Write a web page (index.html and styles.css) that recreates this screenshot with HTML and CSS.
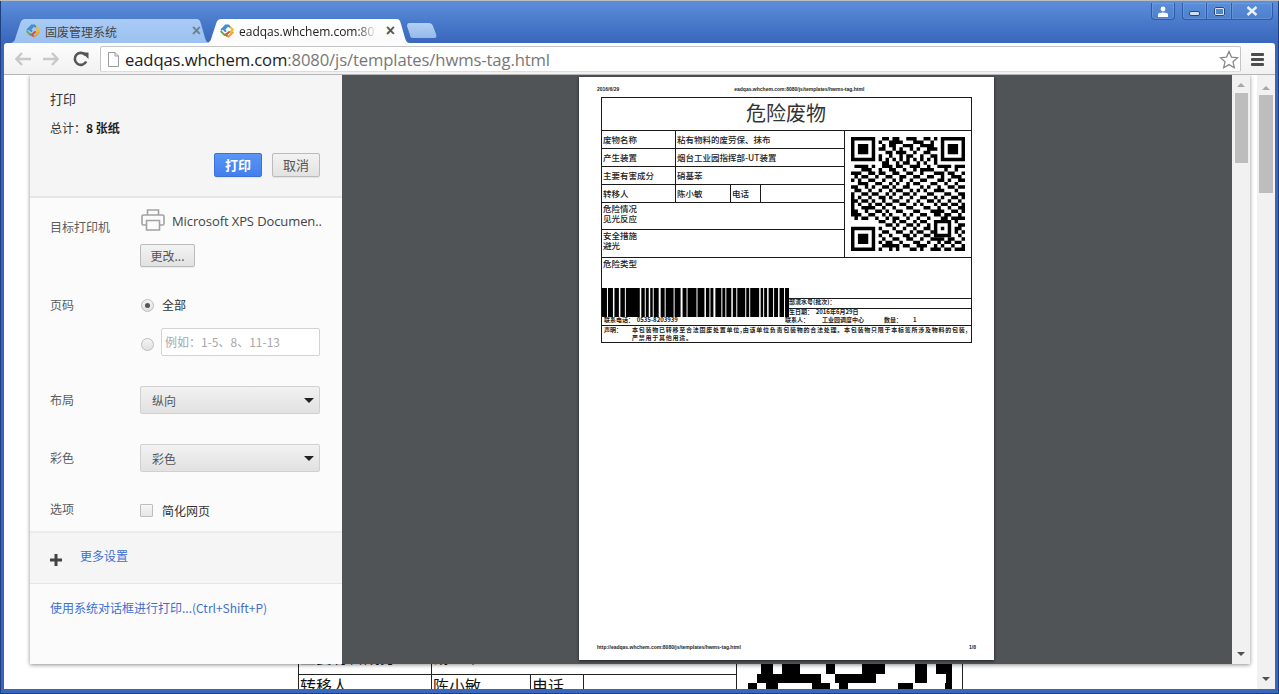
FILE: index.html
```html
<!DOCTYPE html>
<html lang="zh">
<head>
<meta charset="utf-8">
<title>hwms-tag</title>
<link rel="stylesheet" href="styles.css">
</head>
<body>
<div class="window">
  <header class="tabstrip">
    <div class="tab tab-inactive">
      <svg class="favicon" viewBox="0 0 16 16"><path d="M7 2.2 2.6 6.6" class="fav-blue"/><path d="M9 2.2 10.6 3.8" class="fav-blue"/><path d="M2.2 8.6 5.6 12" class="fav-green"/><path d="M9.4 13.8 13.8 9.4" class="fav-orange"/><path d="M11.6 4.4 13.8 6.8 11.6 9" class="fav-yellow"/><path d="M6.4 8 4.8 6.4 8 3.4" class="fav-blue"/><path d="M8 12.8 6.6 11.4" class="fav-red"/><path d="M8 10.8 10 9" class="fav-red"/></svg>
      <span class="tab-title">固废管理系统</span>
      <span class="tab-close">×</span>
    </div>
    <div class="tab tab-active">
      <svg class="favicon" viewBox="0 0 16 16"><path d="M7 2.2 2.6 6.6" class="fav-blue"/><path d="M9 2.2 10.6 3.8" class="fav-blue"/><path d="M2.2 8.6 5.6 12" class="fav-green"/><path d="M9.4 13.8 13.8 9.4" class="fav-orange"/><path d="M11.6 4.4 13.8 6.8 11.6 9" class="fav-yellow"/><path d="M6.4 8 4.8 6.4 8 3.4" class="fav-blue"/><path d="M8 12.8 6.6 11.4" class="fav-red"/><path d="M8 10.8 10 9" class="fav-red"/></svg>
      <span class="tab-title tab-title-fade">eadqas.whchem.com:80</span>
      <span class="tab-close tab-close-dark">×</span>
    </div>
    <div class="newtab"></div>
    <div class="win-controls">
      <div class="win-btn win-user"><svg width="14" height="11" viewBox="0 0 14 11"><circle cx="7" cy="3" r="2.4"/><path d="M2 11V8.4C2 7.4 4 6.6 7 6.6s5 .8 5 1.8V11z"/></svg></div>
      <div class="win-group">
        <div class="win-btn win-min"><span class="glyph-min"></span></div>
        <div class="win-btn win-max"><span class="glyph-max"></span></div>
        <div class="win-btn win-close"><svg width="12" height="10" viewBox="0 0 12 10"><path d="M1.5 1 10.5 9M10.5 1 1.5 9"/></svg></div>
      </div>
    </div>
  </header>

  <nav class="toolbar">
    <svg class="nav-icon" width="16" height="14" viewBox="0 0 16 14"><path d="M7 1 1.5 7 7 13M2 7h14" class="nav-off"/></svg>
    <svg class="nav-icon nav-fwd" width="16" height="14" viewBox="0 0 16 14"><path d="M9 1l5.500 6L9 13M14 7H0" class="nav-off"/></svg>
    <svg class="nav-icon nav-reload" width="16" height="16" viewBox="0 0 16 16"><path d="M13.200 10.500A6 6 0 1 1 12.600 4.200" class="nav-on"/><path d="M9 1.500h6.500v6.500z" class="nav-fill"/></svg>
    <div class="omnibox">
      <svg class="doc-icon" width="11" height="15" viewBox="0 0 11 15"><path d="M.5.500h6.500l3.500 3.500v10.500h-10zM7 .5v3.500h3.500"/></svg>
      <span class="url"><b class="url-host">eadqas.whchem.com</b>:8080/js/templates/hwms-tag.html</span>
      <svg class="star" width="20" height="19" viewBox="0 0 20 19"><path d="M10 1.500l2.500 5.600 6 .6-4.500 4 1.300 6L10 14.600l-5.300 3.100 1.300-6-4.500-4 6-.6z"/></svg>
    </div>
    <div class="menu-icon"><span></span><span></span><span></span></div>
  </nav>

  <main class="content">
    <div class="doc">
      <table class="doc-table">
        <colgroup><col class="dc1"><col class="dc2"><col class="dc3"><col class="dc4"></colgroup>
        <tr class="doc-row1"><td>主要有害成分</td><td colspan="3">硝基苯</td></tr>
        <tr class="doc-row2"><td>转移人</td><td>陈小敏</td><td>电话</td><td></td></tr>
      </table>
      <div class="doc-qr-cell">
        <svg class="doc-qr" width="204" height="26" viewBox="0 0 204 26"><path d="M13 0h12v10H13zM34 0h18v10H34zM78 0h9v10h-9zM114 0h23v10h-23zM167 0h12v10h-12zM188 0h16v10h-16zM9 10h64v9H9zM87 10h41v9H87zM167 10h12v9h-12zM198 10h6v9h-6zM0 19h9v7H0zM18 19h12v7H18zM64 19h18v7H64zM91 19h9v7h-9zM150 19h15v7h-15zM197 19h7v7h-7z"/></svg>
      </div>
      <div class="doc-scroll">
        <span class="arrow-up"></span>
        <span class="scroll-thumb scroll-thumb-outer"></span>
        <span class="scroll-space"></span>
        <span class="arrow-down"></span>
      </div>
    </div>

    <section class="dialog">
      <aside class="sidebar">
        <div class="side-head">
          <h1 class="side-title">打印</h1>
          <p class="side-total">总计：<b>8 张纸</b></p>
          <div class="side-actions">
            <button class="btn btn-primary">打印</button>
            <button class="btn btn-cancel">取消</button>
          </div>
        </div>
        <div class="settings">
          <div class="row">
            <div class="row-label row-label-dest">目标打印机</div>
            <div class="row-ctl">
              <div class="printer">
                <svg width="24" height="22" viewBox="0 0 24 22"><path d="M6.500 6V1h11v5M5.500 16H2.500A1.500 1.500 0 0 1 1 14.500V7.500A1.500 1.500 0 0 1 2.500 6h19A1.500 1.500 0 0 1 23 7.500v7a1.500 1.500 0 0 1-1.500 1.500h-3M5.500 11.500h13v9.500h-13z"/></svg>
                <span class="printer-name">Microsoft XPS Documen..</span>
              </div>
              <button class="btn btn-change">更改...</button>
            </div>
          </div>
          <div class="row row-pages">
            <div class="row-label">页码</div>
            <div class="row-ctl">
              <label class="check-line"><span class="radio radio-on"></span><span class="check-text">全部</span></label>
              <div class="range-line"><span class="radio"></span><span class="range-input">例如：1-5、8、11-13</span></div>
            </div>
          </div>
          <div class="row row-select">
            <div class="row-label row-label-select">布局</div>
            <div class="select">纵向<span class="caret"></span></div>
          </div>
          <div class="row row-select">
            <div class="row-label row-label-select">彩色</div>
            <div class="select">彩色<span class="caret"></span></div>
          </div>
          <div class="row row-option">
            <div class="row-label row-label-option">选项</div>
            <label class="check-line"><span class="checkbox"></span><span class="check-text">简化网页</span></label>
          </div>
        </div>
        <div class="more">
          <svg class="plus" width="12" height="12" viewBox="0 0 12 12"><path d="M4.500 0h3v4.500H12v3H7.500V12h-3V7.500H0v-3h4.500z"/></svg>
          <a class="link">更多设置</a>
        </div>
        <div class="sys-link"><a class="link">使用系统对话框进行打印...(Ctrl+Shift+P)</a></div>
      </aside>

      <div class="preview">
        <article class="page">
          <div class="page-head"><span>2016/6/29</span><span class="page-head-url">eadqas.whchem.com:8080/js/templates/hwms-tag.html</span></div>
          <table class="tag">
            <colgroup><col class="c1"><col class="c2"><col class="c3"><col class="c4"><col class="c5"></colgroup>
            <tr class="r-title"><td colspan="5">危险废物</td></tr>
            <tr class="r-18"><td>废物名称</td><td colspan="3">粘有物料的废劳保、抹布</td>
              <td rowspan="6" class="qr-cell">
                <svg class="qr" width="114" height="114" viewBox="0 0 33 33">
                  <path class="qr-f" fill-rule="evenodd" d="M0 0h7v7H0zM1 1v5h5V1zM2 2h3v3H2zM26 0h7v7h-7zM27 1v5h5V1zM28 2h3v3h-3zM0 26h7v7H0zM1 27v5h5v-5zM2 28h3v3H2zM24 24h5v5h-5zM25 25v3h3v-3zM26 26h1v1h-1z"/>
                  <path class="qr-d" d="M9 .5h2M12 .5h2M16 .5h3M21 .5h2M24 .5h1M8 1.500h1M11 1.500h4M18 1.500h3M23 1.500h1M9 2.500h1M11 2.500h2M15 2.500h3M20 2.500h4M8 3.500h2M12 3.500h1M14 3.500h1M17 3.500h1M19 3.500h1M22 3.500h3M10 4.500h2M13 4.500h3M18 4.500h1M21 4.500h2M8 5.500h1M11 5.500h1M14 5.500h1M16 5.500h2M20 5.500h1M23 5.500h2M8 6.500h1M10 6.500h1M12 6.500h1M14 6.500h1M16 6.500h1M18 6.500h1M20 6.500h1M22 6.500h1M24 6.500h1M9 7.500h2M13 7.500h1M15 7.500h2M19 7.500h1M21 7.500h1M24 7.500h1M1 8.500h4M6 8.500h1M9 8.500h3M13 8.500h2M17 8.500h3M22 8.500h1M25 8.500h4M30 8.500h3M3 9.500h3M8 9.500h1M11 9.500h2M15 9.500h1M18 9.500h1M20 9.500h4M27 9.500h1M30 9.500h1M0 10.500h3M5 10.500h2M8 10.500h2M12 10.500h2M16 10.500h2M20 10.500h1M24 10.500h3M28 10.500h2M32 10.500h1M1 11.500h1M3 11.500h2M7 11.500h1M10 11.500h2M14 11.500h2M18 11.500h2M22 11.500h2M26 11.500h1M29 11.500h3M0 12.500h1M2 12.500h1M5 12.500h2M9 12.500h1M12 12.500h1M14 12.500h1M17 12.500h1M20 12.500h2M25 12.500h2M28 12.500h1M31 12.500h2M2 13.500h3M7 13.500h2M11 13.500h1M13 13.500h1M16 13.500h1M18 13.500h2M23 13.500h2M27 13.500h1M30 13.500h1M0 14.500h2M4 14.500h1M6 14.500h1M9 14.500h2M12 14.500h1M15 14.500h2M20 14.500h1M22 14.500h1M25 14.500h1M28 14.500h2M31 14.500h2M1 15.500h2M5 15.500h1M8 15.500h1M11 15.500h1M13 15.500h2M17 15.500h1M19 15.500h1M21 15.500h1M24 15.500h3M30 15.500h1M0 16.500h1M3 16.500h2M6 16.500h2M10 16.500h1M12 16.500h1M15 16.500h2M18 16.500h1M22 16.500h2M27 16.500h2M31 16.500h2M0 17.500h1M2 17.500h1M5 17.500h1M8 17.500h2M11 17.500h1M14 17.500h1M17 17.500h1M20 17.500h2M24 17.500h1M26 17.500h1M29 17.500h2M32 17.500h1M0 18.500h2M3 18.500h2M6 18.500h1M9 18.500h1M12 18.500h2M16 18.500h1M19 18.500h1M22 18.500h2M25 18.500h1M28 18.500h1M31 18.500h1M0 19.500h1M2 19.500h1M5 19.500h1M7 19.500h2M10 19.500h2M14 19.500h2M18 19.500h1M20 19.500h1M24 19.500h1M26 19.500h2M29 19.500h2M32 19.500h1M0 20.500h1M3 20.500h4M9 20.500h1M12 20.500h1M16 20.500h2M21 20.500h2M25 20.500h1M28 20.500h1M31 20.500h2M0 21.500h2M4 21.500h1M7 21.500h2M10 21.500h1M13 21.500h2M18 21.500h2M23 21.500h4M29 21.500h2M32 21.500h1M0 22.500h3M5 22.500h2M9 22.500h1M11 22.500h1M15 22.500h1M17 22.500h1M20 22.500h2M24 22.500h2M27 22.500h2M31 22.500h1M1 23.500h1M3 23.500h2M7 23.500h1M10 23.500h1M12 23.500h2M16 23.500h1M19 23.500h1M22 23.500h1M26 23.500h2M29 23.500h4M8 24.500h2M12 24.500h1M14 24.500h2M18 24.500h1M20 24.500h2M30 24.500h1M10 25.500h2M13 25.500h1M16 25.500h2M19 25.500h1M22 25.500h1M31 25.500h2M8 26.500h1M12 26.500h1M15 26.500h1M18 26.500h1M21 26.500h2M30 26.500h2M9 27.500h2M13 27.500h2M17 27.500h1M19 27.500h2M23 27.500h1M30 27.500h1M32 27.500h1M8 28.500h1M11 28.500h1M15 28.500h2M18 28.500h1M21 28.500h2M31 28.500h1M9 29.500h1M12 29.500h2M16 29.500h2M20 29.500h1M23 29.500h4M28 29.500h2M32 29.500h1M8 30.500h1M10 30.500h2M14 30.500h1M18 30.500h2M22 30.500h1M25 30.500h1M27 30.500h2M30 30.500h2M9 31.500h5M15 31.500h2M19 31.500h3M24 31.500h1M26 31.500h1M29 31.500h1M32 31.500h1M8 32.500h1M11 32.500h1M13 32.500h1M17 32.500h2M20 32.500h1M23 32.500h3M27 32.500h2M30 32.500h3"/>
                </svg>
              </td></tr>
            <tr class="r-18"><td>产生装置</td><td colspan="3">烟台工业园指挥部-UT装置</td></tr>
            <tr class="r-18"><td>主要有害成分</td><td colspan="3">硝基苯</td></tr>
            <tr class="r-18"><td>转移人</td><td>陈小敏</td><td>电话</td><td></td></tr>
            <tr class="r-27"><td colspan="4" class="top">危险情况<br>见光反应</td></tr>
            <tr class="r-28"><td colspan="4" class="top">安全措施<br>避光</td></tr>
            <tr><td colspan="5" class="lower">
              <div class="hazard">危险类型</div>
              <div class="bar-row">
                <svg class="barcode" width="187" height="29" viewBox="0 0 188 29"><path d="M0 0h188v29H0z"/><path class="bar-gap" d="M5 0h1v29H5zM11 0h1.500v29H11zM17 0h1.500v29H17zM23 0h1v29h-1zM38 0h1.500v29H38zM43 0h1v29H43zM47 0h1.500v29H47zM51 0h1v29h-1zM57 0h2v29h-2zM63 0h1v29H63zM72 0h1v29H72zM79 0h2v29h-2zM85 0h1v29h-1zM95 0h1v29H95zM103 0h1.500v29H103zM108 0h1v29h-1zM112 0h2v29h-2zM120 0h1v29H120zM124 0h1v29H124zM130 0h1.500v29H130zM135 0h1v29h-1zM144 0h1v29h-1zM148 0h1v29h-1zM158 0h1.500v29H158zM162 0h1v29H162zM166 0h1.500v29H166zM172 0h1v29h-1zM177 0h1.500v29H177zM183 0h1v29H183z"/></svg>
                <div class="bar-side">
                  <div class="bar-line">部流水号(批次)：</div>
                  <div class="bar-line">生日期：&nbsp; 2016年6月29日</div>
                </div>
              </div>
              <div class="contact">
                <span class="ct-phone">联系电话：&nbsp; 0535-8203939</span>
                <span class="ct-person">联系人：</span>
                <span class="ct-org">工业园调度中心</span>
                <span class="ct-qty">数量：</span>
                <span>1</span>
              </div>
              <div class="notice">
                <span class="notice-label">声明：</span>
                <span class="notice-body">本包装物已转移至合法固废处置单位,由该单位负责包装物的合法处理。本包装物只限于本标签所涉及物料的包装,<br>严禁用于其他用途。</span>
              </div>
            </td></tr>
          </table>
          <div class="page-foot"><span>http://eadqas.whchem.com:8080/js/templates/hwms-tag.html</span><span>1/8</span></div>
        </article>
      </div>

      <div class="preview-scroll">
        <span class="arrow-up"></span>
        <span class="scroll-thumb scroll-thumb-inner"></span>
        <span class="scroll-space"></span>
        <span class="arrow-down"></span>
      </div>
    </section>
  </main>
</div>
</body>
</html>
```

FILE: styles.css
```css
* { box-sizing: border-box; }
html, body { margin: 0; height: 100%; overflow: hidden; }
body {
  font-family: "Noto Sans CJK SC", "Noto Sans", sans-serif;
  font-size: 12px;
  color: #333;
  background: #c9c9c9;
}
.window {
  width: 1279px;
  height: 694px;
  display: flex;
  flex-direction: column;
  border-top: 1px solid #bdbdbd;
  padding: 2px 4px 5px;
  background: linear-gradient(#5c8fdb 0, #4a7bcb 20px, #3a66bb 42px, #3a66bb 100%);
  box-shadow: inset -1px -1px 0 #1f3f80, inset 1px 0 0 #1f3f80;
}

/* tab strip */
.tabstrip { height: 40px; display: flex; align-items: flex-end; flex: none; }
.tab {
  height: 24px;
  display: flex;
  align-items: center;
  flex: none;
  position: relative;
}
.tab-inactive {
  width: 200px;
  margin-left: 6px;
  padding-left: 15px;
  background: linear-gradient(#a9cbf5, #9cc1f0);
  clip-path: path("M0 24 C4 24 5 21 6 17 L10 5 C11 1 13 0 16 0 L186 0 C189 0 190 1 191 5 L195 19 C196 22 197 24 200 24 Z");
  color: #444;
}
.tab-active {
  width: 204px;
  margin-left: -4px;
  padding-left: 13px;
  background: linear-gradient(#fff, #fafafa);
  clip-path: path("M0 24 C4 24 5 21 6 17 L10 5 C11 1 13 0 16 0 L190 0 C193 0 194 1 195 5 L199 19 C200 22 201 24 204 24 Z");
  color: #222;
  z-index: 1;
}
.favicon { width: 16px; height: 16px; flex: none; fill: none; stroke-width: 2; stroke-linecap: round; stroke-linejoin: round; }
.fav-blue { stroke: #3f8fd0; }
.fav-green { stroke: #5cb04a; }
.fav-orange { stroke: #ef9d2c; }
.fav-yellow { stroke: #efb92c; }
.fav-red { stroke: #d94f38; }
.tab-title { margin-left: 4px; font-size: 12px; white-space: nowrap; overflow: hidden; }
.tab-title-fade {
  width: 138px;
  font-family: "Open Sans", sans-serif;
  font-size: 12px;
  -webkit-mask-image: linear-gradient(90deg, #000 85%, transparent);
  mask-image: linear-gradient(90deg, #000 85%, transparent);
}
.tab-close { margin-left: auto; font: 16px/1 "Liberation Sans", sans-serif; font-weight: bold; color: #6c7f96; }
.tab-close-dark { margin-right: 15px; color: #555; }
.tab-inactive .tab-close { margin-right: 9px; }
.newtab {
  width: 30px;
  height: 15px;
  margin-left: -3px;
  margin-bottom: 5px;
  background: linear-gradient(#b4d0f3, #94b9ea);
  clip-path: path("M2 0 L22 0 C24 0 25 1 26 3 L29 11 C30 14 29 15 27 15 L6 15 C4 15 3 14 3 12 L0 3 C0 1 1 0 2 0 Z");
  flex: none;
}
.win-controls { margin-left: auto; align-self: flex-start; display: flex; gap: 7px; margin-right: 2px; }
.win-btn {
  height: 17px;
  display: flex;
  align-items: center;
  justify-content: center;
  border: 1px solid #2f5aa8;
  border-top: 0;
  background: linear-gradient(#5b8ed8, #4d7fcd);
  box-shadow: inset 0 0 0 1px rgba(255,255,255,.12);
}
.win-user { width: 24px; border-radius: 0 0 4px 4px; }
.win-user svg { fill: #fff; }
.win-group { display: flex; }
.win-min { width: 25px; border-radius: 0 0 0 4px; }
.win-max { width: 25px; border-left: 0; }
.win-close { width: 41px; border-left: 0; border-radius: 0 0 4px 0; }
.glyph-min { width: 11px; height: 5px; margin-top: 5px; background: #cfe0f5; border: 1px solid #26487f; border-radius: 2px; }
.glyph-max { width: 11px; height: 9px; border: 2px solid #dbe8f8; outline: 1px solid #26487f; outline-offset: -1px; border-radius: 2px; }
.win-close svg { fill: none; stroke: #e8f0fa; stroke-width: 2.4; }

/* toolbar */
.toolbar {
  height: 32px;
  flex: none;
  display: flex;
  align-items: center;
  padding: 1px 0 0 11px;
  background: linear-gradient(#fdfdfd, #f1f1f1);
  border-radius: 3px 3px 0 0;
  border-bottom: 1px solid #b5b5b5;
  position: relative;
}
.nav-icon { flex: none; fill: none; }
.nav-off { stroke: #c8c8c8; stroke-width: 2.4; }
.nav-on { stroke: #555; stroke-width: 2.6; }
.nav-fill { fill: #555; }
.nav-fwd { margin-left: 12px; }
.nav-reload { margin-left: 14px; }
.omnibox {
  width: 1141px;
  height: 26px;
  margin-left: 11px;
  display: flex;
  align-items: center;
  padding-left: 7px;
  background: #fff;
  border: 1px solid #c4c4c4;
  border-bottom-color: #ddd;
  border-radius: 2px;
  flex: none;
}
.doc-icon { fill: #fff; stroke: #9c9c9c; stroke-width: 1; flex: none; }
.url { margin: 2px 0 0 6px; font: 16.650px/24px "Open Sans", sans-serif; color: #777; white-space: nowrap; letter-spacing: -.12px; }
.url-host { font-weight: 400; color: #222; }
.star { margin-left: auto; margin-right: 1px; fill: #fff; stroke: #8a8a8a; stroke-width: 1.3; flex: none; }
.menu-icon { margin-left: 10px; width: 13px; display: flex; flex-direction: column; gap: 2px; flex: none; }
.menu-icon span { height: 3px; background: #4d4d4d; border-radius: 1px; }

/* page behind the dialog */
.content { flex: 1; min-height: 0; position: relative; background: #fff; overflow: hidden; }
.doc { height: 100%; display: flex; position: relative; }
.doc-table {
  position: absolute;
  left: 294px;
  top: 570px;
  width: 438px;
  table-layout: fixed;
  border-collapse: collapse;
  font: 16px/22px "Noto Sans CJK SC", sans-serif;
  color: #111;
}
.dc1 { width: 133px; } .dc2 { width: 99px; } .dc3 { width: 53px; } .dc4 { width: 153px; }
.doc-table td { border: 1px solid #222; padding: 0 2px 0 1px; white-space: nowrap; vertical-align: top; }
.doc-row1 td { height: 29px; padding-top: 0; line-height: 20px; }
.doc-row2 td { height: 26px; line-height: 20px; }
.doc-qr-cell {
  position: absolute;
  left: 732px;
  top: 570px;
  width: 227px;
  height: 60px;
  border: 1px solid #222;
}
.doc-qr { position: absolute; left: 11px; top: 18px; fill: #000; }
.doc-scroll {
  margin-left: auto;
  width: 18px;
  background: #f1f1f1;
  display: flex;
  flex-direction: column;
  align-items: center;
  position: relative;
}

/* print dialog */
.dialog {
  position: absolute;
  left: 26px;
  top: 0;
  width: 1220px;
  height: 589px;
  display: flex;
  box-shadow: 0 1px 4px rgba(0,0,0,.45);
}
.sidebar { width: 312px; flex: none; display: flex; flex-direction: column; background: #fbfbfb; color: #555; }
.side-head { background: #f5f5f5; padding: 14px 21px 19px 20px; border-bottom: 2px solid #e6e6e6; height: 123px; }
.side-title { margin: 0; font-size: 13px; line-height: 20px; font-weight: 400; color: #333; }
.side-total { margin: 10px 0 0; font-size: 12px; line-height: 18px; color: #333; }
.side-total b { color: #222; font-weight: 700; }
.side-actions { margin-top: 16px; display: flex; justify-content: flex-end; gap: 10px; padding-right: 1px; }
.btn {
  height: 24px;
  width: 48px;
  padding: 0;
  font: 13px/22px "Noto Sans CJK SC", sans-serif;
  border-radius: 2px;
  border: 1px solid #bbb;
  background: linear-gradient(#f3f3f3, #e2e2e2);
  color: #555;
  box-shadow: 0 1px 0 rgba(0,0,0,.06);
}
.btn-primary { background: linear-gradient(#5a96f5, #427fed); border-color: #3a72d8; color: #fff; font-weight: 700; }
.btn-change { width: 55px; height: 23px; margin-top: 12px; font-size: 12px; display: block; }
.settings { flex: none; height: 333px; padding: 10px 21px 0 20px; }
.row { display: flex; }
.row-label { width: 90px; flex: none; line-height: 18px; font-size: 12px; color: #5c5c5c; }
.row-label-dest { margin-top: 10px; }
.row-label-select { line-height: 28px; }
.row-label-option { margin-top: -1px; }
.row-ctl { flex: 1; min-width: 0; }
.printer { height: 24px; display: flex; align-items: center; padding-left: 1px; }
.printer svg { fill: none; stroke: #a2a2a2; stroke-width: 1.6; flex: none; margin-bottom: 1px; }
.printer-name { margin: 1px 0 0 7px; font: 13px/20px "Open Sans", sans-serif; color: #444; white-space: nowrap; letter-spacing: -.1px; }
.row-pages { margin-top: 29px; }
.check-line { height: 18px; display: flex; align-items: center; }
.check-text { color: #333; margin-left: 8px; font-size: 12px; line-height: 18px; }
.radio {
  width: 13px;
  height: 13px;
  margin-left: 1px;
  flex: none;
  border-radius: 50%;
  border: 1px solid #bdbdbd;
  background: linear-gradient(#f4f4f4, #e0e0e0);
  position: relative;
}
.radio-on::after {
  content: "";
  position: absolute;
  left: 3px;
  top: 3px;
  width: 5px;
  height: 5px;
  border-radius: 50%;
  background: #555;
}
.range-line { margin-top: 14px; display: flex; align-items: center; height: 28px; }
.range-line .radio { margin-top: 4px; }
.range-input {
  margin-left: 7px;
  width: 159px;
  height: 28px;
  padding-left: 3px;
  border: 1px solid #d3d3d3;
  border-radius: 2px;
  background: #fff;
  color: #a8a8a8;
  font-size: 12px;
  line-height: 26px;
  white-space: nowrap;
}
.row-select { margin-top: 30px; }
.select {
  width: 180px;
  height: 28px;
  padding-left: 11px;
  display: flex;
  align-items: center;
  justify-content: space-between;
  border: 1px solid #d0d0d0;
  border-radius: 2px;
  background: linear-gradient(#f2f2f2, #e1e1e1);
  color: #555;
  font-size: 12px;
}
.caret { width: 0; height: 0; margin-right: 5px; border: 5px solid transparent; border-top: 5px solid #222; border-bottom: 0; }
.row-option { margin-top: 29px; }
.checkbox { width: 13px; height: 13px; flex: none; margin-top: 1px; border: 1px solid #bdbdbd; border-radius: 1px; background: linear-gradient(#f6f6f6, #e6e6e6); }
.row-option .check-text { margin: 1px 0 0 9px; }
.more {
  height: 53px;
  flex: none;
  display: flex;
  align-items: flex-start;
  padding: 14px 0 0 20px;
  background: #f5f5f5;
  border-top: 2px solid #ebebeb;
  border-bottom: 1px solid #e6e6e6;
}
.plus { fill: #444; margin-top: 7px; flex: none; }
.more .link { margin-left: 18px; }
.link { color: #3c6fd0; font-size: 12px; line-height: 18px; }
.sys-link { padding: 15px 21px 0 20px; }

/* preview */
.preview { width: 890px; flex: none; background: #515457; display: flex; padding: 2px 0 0 237px; }
.page {
  width: 415px;
  height: 583px;
  background: #fff;
  box-shadow: 0 1px 3px rgba(0,0,0,.6);
  display: flex;
  flex-direction: column;
  color: #111;
}
.page-head { height: 20px; padding: 9px 0 0 18px; font: 700 5px/6px "Liberation Sans", sans-serif; color: #222; display: flex; flex: none; }
.page-head-url { margin-left: 115px; }
.page-foot { margin-top: auto; padding: 0 18px 10px; display: flex; justify-content: space-between; font: 700 5px/6px "Liberation Sans", sans-serif; color: #222; }
.tag {
  width: 370px;
  margin-left: 22px;
  table-layout: fixed;
  border-collapse: collapse;
  font: 500 8.500px/10px "Noto Sans CJK SC", sans-serif;
  color: #222;
}
.c1 { width: 74px; } .c2 { width: 55px; } .c3 { width: 30px; } .c4 { width: 84px; } .c5 { width: 127px; }
.tag td { border: 1px solid #1a1a1a; padding: 0 1px 2px 1px; white-space: nowrap; }
.r-title td { height: 33px; text-align: center; font-size: 20px; line-height: 26px; font-weight: 400; color: #333; padding-left: 0; }
.r-18 td { height: 18px; }
.r-27 td { height: 27px; }
.r-28 td { height: 28px; }
.tag td.top { vertical-align: top; padding-top: 0; }
.tag td.qr-cell { padding: 0; text-align: center; vertical-align: middle; }
.qr { display: block; margin: 0 auto; }
.qr-f { fill: #000; }
.qr-d { fill: none; stroke: #000; stroke-width: 1; }
.tag td.lower { padding: 0; height: 84px; vertical-align: top; }
.hazard { height: 30px; padding: 0 0 0 1px; }
.bar-row { height: 29px; display: flex; align-items: flex-start; }
.barcode { flex: none; display: block; fill: #000; }
.bar-gap { fill: #fff; }
.bar-side { flex: 1; padding-top: 10px; }
.bar-line { height: 10px; border-top: 1px solid #1a1a1a; font-size: 6px; line-height: 6px; font-weight: 700; white-space: nowrap; }
.contact { height: 8px; display: flex; padding-left: 2px; font-size: 6px; line-height: 6px; font-weight: 700; }
.ct-phone { width: 181px; }
.ct-person { width: 37px; }
.ct-org { width: 62px; }
.ct-qty { width: 29px; }
.notice { border-top: 1px solid #1a1a1a; height: 17px; display: flex; padding: 0 2px; font-size: 6px; line-height: 8px; font-weight: 700; }
.notice-label { width: 28px; flex: none; }
.notice-body { white-space: nowrap; letter-spacing: .75px; }

/* scrollbars */
.preview-scroll { width: 18px; flex: none; background: #f1f1f1; display: flex; flex-direction: column; align-items: center; }
.arrow-up { flex: none; width: 0; height: 0; border: 4px solid transparent; border-top: 0; border-bottom: 4px solid #a8a8a8; }
.arrow-down { flex: none; width: 0; height: 0; margin-bottom: 8px; border: 4px solid transparent; border-bottom: 0; border-top: 4px solid #505050; }
.preview-scroll .arrow-up { margin-top: 8px; }
.doc-scroll .arrow-up { margin-top: 11px; }
.scroll-thumb { flex: none; background: #bdbdbd; }
.scroll-thumb-inner { width: 13px; height: 70px; margin-top: 6px; }
.scroll-thumb-outer { width: 14px; height: 98px; margin-top: 5px; }
.scroll-space { flex: 1; }
```
